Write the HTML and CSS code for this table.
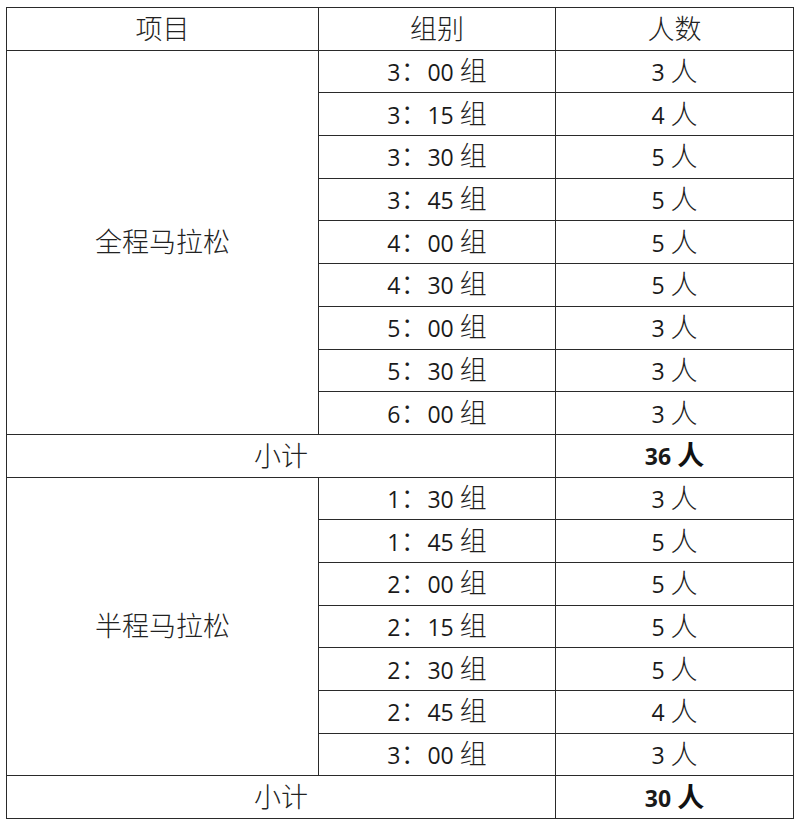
FILE: index.html
```html
<!DOCTYPE html>
<html lang="zh">
<head>
<meta charset="utf-8">
<link rel="stylesheet" href="styles.css">
</head>
<body>
<table class="grid">
<colgroup><col class="c1"><col class="c2"><col class="c3"></colgroup>
<tr><th>项目</th><th>组别</th><th>人数</th></tr>
<tr><td rowspan="9" class="event">全程马拉松</td><td><span class="n">3</span>：<span class="n">00 </span>组</td><td><span class="n">3 </span>人</td></tr>
<tr><td><span class="n">3</span>：<span class="n">15 </span>组</td><td><span class="n">4 </span>人</td></tr>
<tr><td><span class="n">3</span>：<span class="n">30 </span>组</td><td><span class="n">5 </span>人</td></tr>
<tr><td><span class="n">3</span>：<span class="n">45 </span>组</td><td><span class="n">5 </span>人</td></tr>
<tr><td><span class="n">4</span>：<span class="n">00 </span>组</td><td><span class="n">5 </span>人</td></tr>
<tr><td><span class="n">4</span>：<span class="n">30 </span>组</td><td><span class="n">5 </span>人</td></tr>
<tr><td><span class="n">5</span>：<span class="n">00 </span>组</td><td><span class="n">3 </span>人</td></tr>
<tr><td><span class="n">5</span>：<span class="n">30 </span>组</td><td><span class="n">3 </span>人</td></tr>
<tr><td><span class="n">6</span>：<span class="n">00 </span>组</td><td><span class="n">3 </span>人</td></tr>
<tr><td colspan="2" class="sub">小计</td><td class="total"><span class="n">36 </span>人</td></tr>
<tr><td rowspan="7" class="event">半程马拉松</td><td><span class="n">1</span>：<span class="n">30 </span>组</td><td><span class="n">3 </span>人</td></tr>
<tr><td><span class="n">1</span>：<span class="n">45 </span>组</td><td><span class="n">5 </span>人</td></tr>
<tr><td><span class="n">2</span>：<span class="n">00 </span>组</td><td><span class="n">5 </span>人</td></tr>
<tr><td><span class="n">2</span>：<span class="n">15 </span>组</td><td><span class="n">5 </span>人</td></tr>
<tr><td><span class="n">2</span>：<span class="n">30 </span>组</td><td><span class="n">5 </span>人</td></tr>
<tr><td><span class="n">2</span>：<span class="n">45 </span>组</td><td><span class="n">4 </span>人</td></tr>
<tr><td><span class="n">3</span>：<span class="n">00 </span>组</td><td><span class="n">3 </span>人</td></tr>
<tr><td colspan="2" class="sub">小计</td><td class="total"><span class="n">30 </span>人</td></tr>
</table>
</body>
</html>
```
FILE: styles.css
```css
html, body {
  margin: 0;
  padding: 0;
  background: #ffffff;
}
body {
  padding: 7px 0 0 6px;
  font-family: "Noto Sans CJK SC", sans-serif;
  color: #1f1f1f;
}
.grid {
  border-collapse: collapse;
  width: 787px;
  table-layout: fixed;
}
.c1 { width: 312px; }
.c2 { width: 237px; }
.c3 { width: 238px; }
.grid th, .grid td {
  border: 1.5px solid #2a2a2a;
  height: 42.7px;
  padding: 0 0 3px 0;
  text-align: center;
  vertical-align: middle;
  font-size: 27px;
  line-height: 1;
  font-weight: 300;
  box-sizing: border-box;
}
.grid th, .grid .event, .grid .sub {
  color: #222;
}
.n {
  font-family: "Open Sans", "Liberation Sans", sans-serif;
  font-size: 23px;
  font-weight: normal;
  color: #1a1a1a;
}
.grid .total {
  font-weight: bold;
  color: #111;
}
.grid .total .n {
  font-weight: bold;
}
```
